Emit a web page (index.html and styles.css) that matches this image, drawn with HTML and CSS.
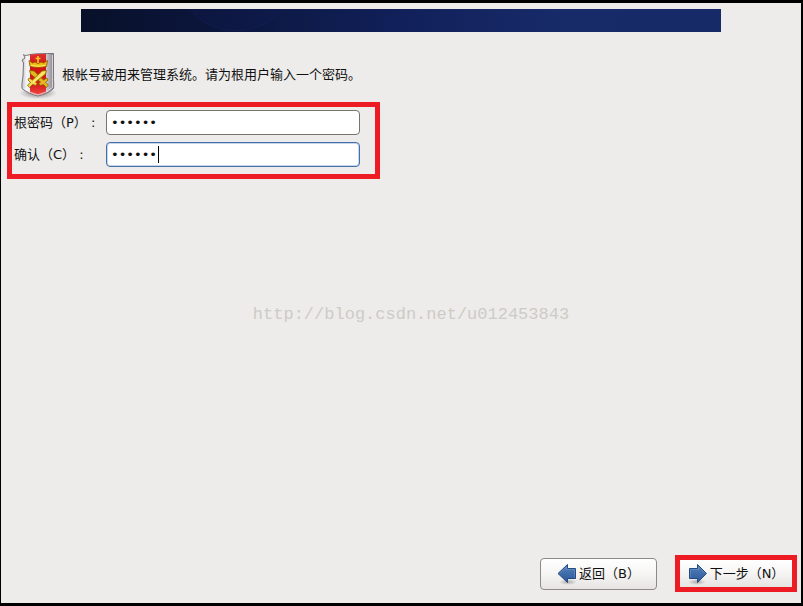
FILE: index.html
```
<!DOCTYPE html>
<html lang="zh-CN">
<head>
    <meta charset="UTF-8">
    <meta name="viewport" content="width=device-width, initial-scale=1.0">
    <title>根密码</title>
    <link rel="stylesheet" href="styles.css">
</head>

<body>
    <header class="banner">
        <svg width="100%" height="23" aria-hidden="true">
            <circle cx="155" cy="-38" r="60" fill="#12205a" fill-opacity="0.2" stroke="#1a2c68" stroke-opacity="0.3"/>
        </svg>
    </header>

    <main>
        <div class="intro">
            <svg class="shield" width="40" height="48" viewBox="0 0 40 48" aria-hidden="true">
                <defs>
                    <linearGradient id="metal" x1="0" y1="0" x2="1" y2="0">
                        <stop offset="0" stop-color="#c4c2c6"/>
                        <stop offset="0.15" stop-color="#f4f4f5"/>
                        <stop offset="0.7" stop-color="#dddbe0"/>
                        <stop offset="1" stop-color="#88828c"/>
                    </linearGradient>
                    <linearGradient id="red" x1="0" y1="0" x2="0" y2="1">
                        <stop offset="0" stop-color="#e03030"/>
                        <stop offset="0.3" stop-color="#d01414"/>
                        <stop offset="0.75" stop-color="#d61c1c"/>
                        <stop offset="1" stop-color="#ee4a44"/>
                    </linearGradient>
                    <radialGradient id="shade">
                        <stop offset="0" stop-color="#000" stop-opacity="0.45"/>
                        <stop offset="1" stop-color="#000" stop-opacity="0"/>
                    </radialGradient>
                </defs>
                <ellipse cx="20" cy="41" rx="19" ry="6" fill="url(#shade)"/>
                <path d="M5.500 2.500C7 4 9 3.500 12 2.500C18 1.500 28 1.500 35.500 1.500V24C35.500 29 36 33 35.500 36.500C32 40 26 42.500 20 44C14 42.500 8 40 4 36.500C3.500 33 4.500 28 5 24L5.500 11L4 8L7 6Z" fill="url(#metal)" stroke="#77747a"/>
                <path d="M12 2.800C17 2 23 2 28 2V40.500C25 42 22.500 42.500 20 43.200C17 42.500 14.500 41.500 12 40.500Z" fill="url(#red)"/>
                <path d="M34.500 3V35.500Q28 41 20 42.800Q12 41 5.200 36" fill="none" stroke="#fff" stroke-opacity="0.6"/>
                <path d="M11 8.500L14.500 11L17 10L20 11.500L23 10L25.500 11L29.500 8.500L28.500 14.500Q20 16.500 12 14.500Z" fill="#eabf13" stroke="#9b4b00" stroke-width="0.8"/>
                <path d="M20 4V11M17.500 6.500H22.500" stroke="#f3c928" stroke-width="1.600"/>
                <path d="M13 13.500Q20 15 27.500 13.500" fill="none" stroke="#fff06c"/>
                <g stroke="#8d6500" stroke-width="0.8" stroke-linejoin="round">
                    <path d="M11.500 18.500L16 19L25.500 28L29 26L30 28L27.500 30.500L30.500 33L28.500 35.500L25.500 32.500L22 33.500L21 31.500L22.500 30L12.500 22Z" fill="#e3b820"/>
                    <path d="M28.500 18.500L24 19L14.500 28L11 26L10 28L12.500 30.500L9.500 33L11.500 35.500L14.500 32.500L18 33.500L19 31.500L17.500 30L27.500 22Z" fill="#f6d84b"/>
                </g>
                <path d="M26.500 20L15 30.500" stroke="#fff5a6"/>
            </svg>
            <p>根帐号被用来管理系统。请为根用户输入一个密码。</p>
        </div>

        <form class="passwords" id="root-password">
            <div class="row">
                <label for="password">根密码（P） :</label>
                <input type="password" id="password" value="centos">
            </div>
            <div class="row">
                <label for="confirm">确认（C） :</label>
                <input type="password" id="confirm" class="active" value="centos">
                <span class="caret"></span>
            </div>
        </form>

        <div class="watermark">http://blog.csdn.net/u012453843</div>
    </main>

    <footer>
        <button type="button" class="back">
            <svg width="20" height="22" viewBox="0 0 20 22" aria-hidden="true">
                <defs>
                    <linearGradient id="blue" x1="0" y1="0" x2="0" y2="1">
                        <stop offset="0" stop-color="#5482bd"/>
                        <stop offset="1" stop-color="#2b5797"/>
                    </linearGradient>
                </defs>
                <ellipse cx="11" cy="19" rx="9" ry="3" fill="url(#shade)" opacity="0.6"/>
                <path d="M1 10.500L10.500 1.500V5.500H18.500V15.500H10.500V19.500Z" fill="url(#blue)" stroke="#234a82"/>
                <path d="M2.500 10.500L9.500 4V6.500H17.500V14.500" fill="none" stroke="#80a6d5" stroke-opacity="0.4"/>
            </svg>
            <span>返回（B）</span>
        </button>
        <div class="highlight">
            <button type="submit" form="root-password" class="next">
                <svg width="20" height="22" viewBox="0 0 20 22" aria-hidden="true">
                    <ellipse cx="9" cy="19" rx="9" ry="3" fill="url(#shade)" opacity="0.6"/>
                    <path d="M18.500 10.500L9.500 1.500V5.500H1.500V15.500H9.500V19.500Z" fill="url(#blue)" stroke="#234a82"/>
                    <path d="M2.500 14.500V6.500H10.500V4L17 10.500" fill="none" stroke="#80a6d5" stroke-opacity="0.4"/>
                </svg>
                <span>下一步（N）</span>
            </button>
        </div>
    </footer>
</body>
</html>
```
FILE: styles.css
```
* {
    box-sizing: border-box;
}
body {
    display: flex;
    flex-direction: column;
    min-height: 100vh;
    margin: 0;
    border: solid black;
    border-width: 3px 2px 3px 1px;
    background-color: #edecea;
    color: #111;
    font-family: "DejaVu Sans", "Noto Sans CJK SC", sans-serif;
    font-size: 13px;
    line-height: 20px;
}
.banner {
    height: 23px;
    margin: 6px 80px 0;
    background: linear-gradient(to right, #081029, #0c1740 25%, #11205a 50%, #172b69 75%, #172a68);
}
.banner svg {
    display: block;
}
main {
    flex: 1;
    display: flex;
    flex-direction: column;
    align-items: flex-start;
    padding: 20px 6px 0;
}
.intro {
    display: flex;
    align-items: center;
    gap: 4px;
    padding-left: 11px;
}
.intro p {
    margin: 0;
    padding-bottom: 2px;
}
.shield {
    flex: none;
}
.passwords {
    display: flex;
    flex-direction: column;
    gap: 7px;
    width: 373px;
    max-width: 100%;
    margin-top: 2px;
    padding: 3px 15px 7px 2px;
    border: 5px solid #ed1c24;
}
.row {
    position: relative;
    display: flex;
    align-items: center;
}
.row label {
    flex: none;
    width: 92px;
    white-space: nowrap;
}
.row input {
    flex: 1;
    min-width: 0;
    height: 25px;
    padding: 0 4px;
    border: 1px solid #77736e;
    border-radius: 4px;
    background-color: white;
    color: #111;
    font: inherit;
}
.row input.active {
    border-color: #456fa8;
    box-shadow: inset 0 0 0 1px #c5d6ec;
}
.caret {
    position: absolute;
    left: 144px;
    top: 4px;
    width: 1px;
    height: 17px;
    background-color: black;
}
.watermark {
    align-self: center;
    margin: 126px 0 20px;
    padding-left: 20px;
    color: #cdcbc6;
    font-family: "Liberation Mono", monospace;
    font-size: 17px;
}
footer {
    display: flex;
    justify-content: flex-end;
    align-items: center;
    gap: 18px;
    padding: 0 4px 11px;
}
button {
    display: flex;
    align-items: center;
    justify-content: center;
    gap: 2px;
    height: 32px;
    border: 1px solid #8e8a85;
    border-radius: 4px;
    background: linear-gradient(#ffffff, #f6f5f4 50%, #e6e4e1);
    color: #111;
    font: inherit;
    white-space: nowrap;
}
.back {
    width: 117px;
    padding: 0;
}
.highlight {
    width: 122px;
    border: 5px solid #ed1c24;
}
.next {
    width: 100%;
    height: 27px;
    padding: 0;
    border: none;
    border-radius: 0;
}
```
